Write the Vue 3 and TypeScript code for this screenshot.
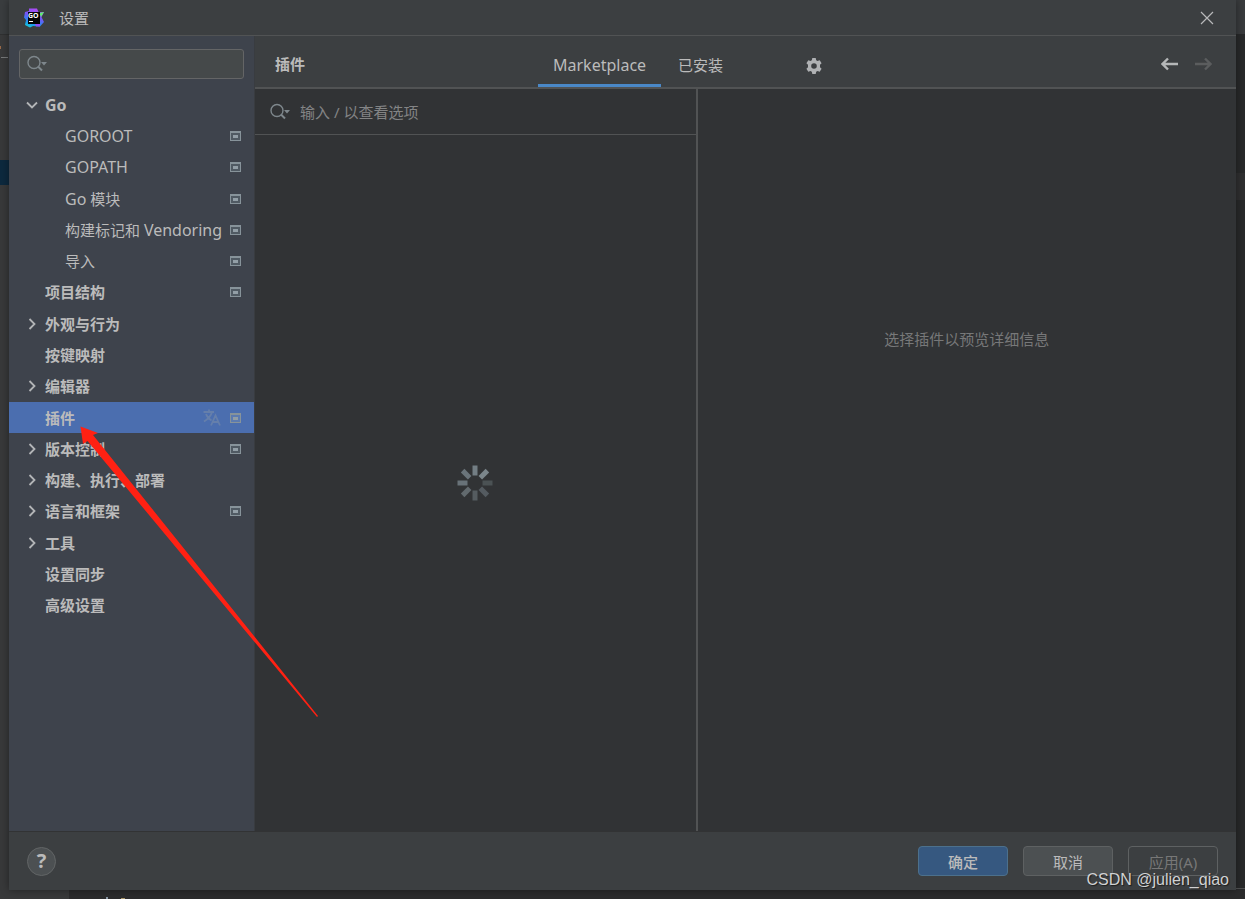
<script setup lang="ts">
import { ref } from 'vue'

interface TreeItem {
  id: string
  label: string
  level: 0 | 1
  arrow?: 'open' | 'closed'
  project?: boolean
}

const items: TreeItem[] = [
  { id: 'go', label: 'Go', level: 0, arrow: 'open' },
  { id: 'goroot', label: 'GOROOT', level: 1, project: true },
  { id: 'gopath', label: 'GOPATH', level: 1, project: true },
  { id: 'modules', label: 'Go 模块', level: 1, project: true },
  { id: 'vendoring', label: '构建标记和 Vendoring', level: 1, project: true },
  { id: 'imports', label: '导入', level: 1, project: true },
  { id: 'structure', label: '项目结构', level: 0, project: true },
  { id: 'appearance', label: '外观与行为', level: 0, arrow: 'closed' },
  { id: 'keymap', label: '按键映射', level: 0 },
  { id: 'editor', label: '编辑器', level: 0, arrow: 'closed' },
  { id: 'plugins', label: '插件', level: 0, project: true },
  { id: 'vcs', label: '版本控制', level: 0, arrow: 'closed', project: true },
  { id: 'build', label: '构建、执行、部署', level: 0, arrow: 'closed' },
  { id: 'languages', label: '语言和框架', level: 0, arrow: 'closed', project: true },
  { id: 'tools', label: '工具', level: 0, arrow: 'closed' },
  { id: 'sync', label: '设置同步', level: 0 },
  { id: 'advanced', label: '高级设置', level: 0 },
]

// Latin runs are set one size larger than the Chinese around them
const runs = (label: string) =>
  label
    .split(/([A-Za-z]+)/)
    .filter(Boolean)
    .map((text) => ({ text, latin: /[A-Za-z]/.test(text) }))

const selected = ref('plugins')
const tab = ref<'marketplace' | 'installed'>('marketplace')
const treeQuery = ref('')
const pluginQuery = ref('')

const spokes = ['#737e84', '#7b868b', '#4b5254', '#545b60', '#555c60', '#626a6e', '#687278', '#6a747a']
</script>

<template>
  <div class="screen">
    <div class="backdrop" aria-hidden="true">
      <span class="bd-left-top"></span>
      <span class="bd-mark"></span>
      <span class="bd-rule"></span>
      <span class="bd-selection"></span>
      <span class="bd-right-top"></span>
      <span class="bd-right-band"></span>
      <span class="bd-bottom"></span>
      <span class="bd-right-rule"></span>
      <span class="bd-glyph"></span>
      <span class="bd-glyph bd-glyph-warm"></span>
    </div>

    <main class="dialog">
      <header class="titlebar">
        <svg class="logo" width="20" height="20" viewBox="0 0 20 20" aria-hidden="true">
          <defs>
            <linearGradient id="logoFill" x1="0.7" y1="0" x2="0.3" y2="1">
              <stop offset="0" stop-color="#b74af7" />
              <stop offset="0.45" stop-color="#7059f5" />
              <stop offset="0.75" stop-color="#218bf0" />
              <stop offset="1" stop-color="#16c7d8" />
            </linearGradient>
          </defs>
          <path d="M5 0.500L13 0.500L14.500 4L20 4L17.500 9L20 14L16 18.500L9 18L6 19.500L1 17L2 12L0 9.500L1 4L5 3Z" fill="url(#logoFill)" />
          <path d="M15.500 5L20 4L17 9Z" fill="#5ff06c" />
          <path d="M11 16L16 15L16 18.500L12 18.500Z" fill="#8b4df6" />
          <rect x="4" y="4" width="12" height="12" fill="#050505" />
          <text x="4" y="10" class="logo-text">GO</text>
          <rect x="5" y="13" width="4" height="1" fill="#fff" />
        </svg>
        <h1>设置</h1>
        <button class="icon-button close" type="button" aria-label="关闭">
          <svg width="14" height="14" viewBox="0 0 14 14"><path d="M1 1L13 13M13 1L1 13" stroke="#b8b9ba" stroke-width="1.200" /></svg>
        </button>
      </header>

      <div class="body">
        <aside class="sidebar">
          <label class="tree-search">
            <svg width="22" height="18" viewBox="0 0 22 18" aria-hidden="true">
              <circle cx="7" cy="7.500" r="6" fill="none" stroke="#7e878c" stroke-width="1.400" />
              <path d="M11 11.500L15 15.500" stroke="#7e878c" stroke-width="2" />
              <path d="M14 7H20L17 10.500Z" fill="#7e878c" />
            </svg>
            <input v-model="treeQuery" type="text" aria-label="搜索设置" />
          </label>
          <nav aria-label="设置">
            <ul class="tree">
              <li v-for="item in items" :key="item.id">
                <a
                  href="#"
                  class="row"
                  :class="{ child: item.level === 1, selected: item.id === selected }"
                  :aria-current="item.id === selected ? 'page' : undefined"
                  @click.prevent="selected = item.id"
                >
                  <svg class="chevron" width="14" height="14" viewBox="0 0 14 14" aria-hidden="true">
                    <path v-if="item.arrow === 'open'" d="M2 4.500L7 9.500L12 4.500" />
                    <path v-else-if="item.arrow === 'closed'" d="M4.500 2L9.500 7L4.500 12" />
                  </svg>
                  <span class="row-label"><span v-for="(run, i) in runs(item.label)" :key="i" :class="{ latin: run.latin }">{{ run.text }}</span></span>
                  <svg v-if="item.id === 'plugins'" class="translate" width="18" height="17" viewBox="0 0 18 17" aria-hidden="true">
                    <path d="M0.500 3H11M6 0.500V3M9 3C8 7 5 10 1 12.500M3 5C4 8 6 10 8.500 11.500M8 16.500L12.500 6.500L17 16.500M9.500 13H15.500" fill="none" stroke="#657fab" stroke-width="1.800" />
                  </svg>
                  <svg v-if="item.project" class="project" width="11" height="10" viewBox="0 0 11 10" aria-hidden="true">
                    <rect width="11" height="10" fill="#87939a" />
                    <rect class="project-gap" x="1" y="2" width="9" height="7" />
                    <rect x="3" y="4" width="5" height="3" fill="#929ea6" />
                  </svg>
                </a>
              </li>
            </ul>
          </nav>
        </aside>

        <section class="content">
          <header class="content-head">
            <h2>插件</h2>
            <div class="tabs" role="tablist">
              <button type="button" role="tab" class="latin" :aria-selected="tab === 'marketplace'" :class="{ active: tab === 'marketplace' }" @click="tab = 'marketplace'">Marketplace</button>
              <button type="button" role="tab" :aria-selected="tab === 'installed'" :class="{ active: tab === 'installed' }" @click="tab = 'installed'">已安装</button>
            </div>
            <button class="icon-button gear" type="button" aria-label="插件设置">
              <svg width="16" height="16" viewBox="0 0 16 16">
                <path fill="#afb1b3" fill-rule="evenodd" d="M6.300 0H9.700L10.200 2.300L11.500 3L13.700 2.200L15.600 5.200L14 6.800V9.200L15.600 10.800L13.700 13.800L11.500 13L10.200 13.700L9.700 16H6.300L5.800 13.700L4.500 13L2.300 13.800L0.400 10.800L2 9.200V6.800L0.400 5.200L2.300 2.200L4.500 3L5.800 2.300ZM8 5.200A2.800 2.800 0 1 0 8 10.800A2.800 2.800 0 1 0 8 5.200Z" />
              </svg>
            </button>
            <div class="history">
              <button class="icon-button" type="button" aria-label="后退">
                <svg width="17" height="14" viewBox="0 0 17 14"><path d="M17 7H2M7 1.500L1.500 7L7 12.500" fill="none" stroke="#b5b7b8" stroke-width="2.400" /></svg>
              </button>
              <button class="icon-button" type="button" aria-label="前进" disabled>
                <svg width="17" height="14" viewBox="0 0 17 14"><path d="M0 7H15M10 1.500L15.500 7L10 12.500" fill="none" stroke="#5b5d5e" stroke-width="2.400" /></svg>
              </button>
            </div>
          </header>

          <div class="panes">
            <div class="list-pane">
              <label class="plugin-search">
                <svg width="22" height="18" viewBox="0 0 22 18" aria-hidden="true">
                  <circle cx="7" cy="7.500" r="6" fill="none" stroke="#7e878c" stroke-width="1.400" />
                  <path d="M11 11.500L15 15.500" stroke="#7e878c" stroke-width="2" />
                  <path d="M14 7H20L17 10.500Z" fill="#7e878c" />
                </svg>
                <input v-model="pluginQuery" type="text" placeholder="输入 / 以查看选项" aria-label="搜索插件" />
              </label>
              <div class="loading" role="status" aria-label="正在加载">
                <svg width="36" height="36" viewBox="0 0 36 36">
                  <rect v-for="(color, i) in spokes" :key="i" x="15.500" y="0.500" width="5" height="10" :fill="color" :transform="`rotate(${i * 45} 18 18)`" />
                </svg>
              </div>
            </div>
            <div class="detail-pane">
              <p>选择插件以预览详细信息</p>
            </div>
          </div>
        </section>
      </div>

      <footer class="footer">
        <button class="help" type="button" aria-label="帮助">?</button>
        <div class="actions">
          <button class="action primary" type="button">确定</button>
          <button class="action" type="button">取消</button>
          <button class="action" type="button" disabled>应用(A)</button>
        </div>
      </footer>
    </main>

    <svg class="pointer" width="240" height="292" viewBox="0 0 240 292" aria-hidden="true">
      <path d="M0.500 0.500L18 7L13 9L238 290L237 291L7.500 15L3 18Z" fill="#ff2113" />
    </svg>
    <span class="watermark">CSDN @julien_qiao</span>
  </div>
</template>

<style>
html,
body {
  background: #2b2b2b;
}
</style>

<style scoped>
* {
  box-sizing: border-box;
}
.screen {
  position: relative;
  display: flex;
  min-height: 100vh;
  padding: 0 9px 9px;
  overflow: hidden;
  background: #28292a;
  color: #bbb;
  font: 15px/20px "Noto Sans", "Noto Sans CJK SC", sans-serif;
}
button,
input {
  font: inherit;
  color: inherit;
}
button {
  padding: 0;
  border: 0;
  background: none;
}
h1,
h2,
p,
ul {
  margin: 0;
  padding: 0;
  font-size: 15px;
}
svg {
  display: block;
  flex: none;
}
.latin {
  font-size: 16px;
}

/* Editor window that shows around the dialog */
.backdrop,
.backdrop span {
  position: absolute;
}
.backdrop {
  inset: 0;
}
.backdrop .bd-left-top {
  left: 0;
  top: 0;
  bottom: 0;
  width: 69px;
  background: linear-gradient(#3a3d3f 34px, #2f3031 34px, #2f3031 35px, #38393a 35px);
}
.backdrop .bd-mark {
  left: 0;
  top: 46px;
  width: 1px;
  height: 3px;
  background: #9a6a48;
}
.backdrop .bd-rule {
  left: 1px;
  top: 57px;
  width: 7px;
  height: 1px;
  background: #77797a;
}
.backdrop .bd-selection {
  left: 0;
  top: 160px;
  width: 9px;
  height: 25px;
  background: #0d293e;
}
.backdrop .bd-right-top {
  right: 0;
  top: 0;
  width: 9px;
  height: 34px;
  background: #393b3d;
}
.backdrop .bd-right-band {
  right: 0;
  top: 173px;
  width: 9px;
  height: 27px;
  background: #2f2f30;
}
.backdrop .bd-bottom {
  left: 69px;
  right: 0;
  bottom: 0;
  height: 9px;
  background: #2b2b2c;
}
.backdrop .bd-right-rule {
  right: 0;
  bottom: 10px;
  width: 9px;
  height: 1px;
  background: #505152;
}
.backdrop .bd-glyph {
  left: 106px;
  bottom: 0;
  width: 2px;
  height: 2px;
  background: #8795a3;
}
.backdrop .bd-glyph-warm {
  left: 121px;
  width: 4px;
  height: 1px;
  background: #a89468;
}

.dialog {
  position: relative;
  display: flex;
  flex: 1;
  flex-direction: column;
  min-width: 0;
  background: #3c3f41;
  box-shadow: 0 0 8px rgba(0, 0, 0, 0.4);
}
.titlebar {
  display: flex;
  align-items: center;
  height: 36px;
  padding: 0 22px 0 15px;
  border-bottom: 1px solid #515354;
}
.titlebar h1 {
  margin-left: 15px;
  font-weight: 400;
}
.logo-text {
  fill: #fff;
  font: 700 7px "Noto Sans", sans-serif;
}
.close {
  margin-left: auto;
}
.body {
  display: flex;
  flex: 1;
  border-bottom: 1px solid #323334;
}

.sidebar {
  width: 246px;
  flex: none;
  padding-top: 13px;
  border-right: 1px solid #393c40;
  background: #3e434c;
}
.tree-search {
  display: flex;
  align-items: center;
  height: 30px;
  margin: 0 10px 10px;
  padding: 0 7px;
  border: 1px solid #646566;
  border-radius: 3px;
  background: #45494a;
}
input {
  flex: 1;
  min-width: 0;
  padding: 0;
  border: 0;
  outline: 0;
  background: none;
}
.tree {
  display: grid;
  grid-auto-rows: 1fr;
  height: 532px;
  list-style: none;
}
.row {
  display: flex;
  align-items: center;
  height: 100%;
  padding: 0 13px 0 16px;
  color: inherit;
  font-weight: 700;
  text-decoration: none;
}
.row.child {
  font-weight: 400;
}
.row.selected {
  background: #4b6eaf;
}
.chevron {
  margin-right: 6px;
  fill: none;
  stroke: #b3b5b7;
  stroke-width: 1.8;
}
.child .chevron {
  margin-right: 26px;
}
.row-label {
  flex: 1;
  white-space: pre;
}
.translate {
  margin-right: 9px;
}
.project-gap {
  fill: #505a63;
}
.selected .project-gap {
  fill: #5c7bb0;
}

.content {
  display: flex;
  flex: 1;
  flex-direction: column;
  min-width: 0;
}
.content-head {
  display: flex;
  align-items: center;
  height: 53px;
  padding: 0 24px 0 20px;
  border-bottom: 2px solid #515354;
}
.content-head h2 {
  width: 263px;
  padding-top: 4px;
}
.tabs {
  display: flex;
  align-self: stretch;
  gap: 2px;
}
.tabs button {
  padding: 12px 15px 3px;
  border-bottom: 3px solid transparent;
}
.tabs .active {
  border-color: #4a88c7;
}
.gear {
  margin: 8px 0 0 68px;
}
.history {
  display: flex;
  gap: 17px;
  margin: 4px 0 0 auto;
}
.panes {
  display: flex;
  flex: 1;
  background: #313335;
}
.list-pane {
  display: flex;
  flex: 9;
  flex-direction: column;
  min-width: 0;
}
.plugin-search {
  display: flex;
  align-items: center;
  gap: 8px;
  height: 46px;
  padding: 0 15px;
  border-bottom: 1px solid #515354;
}
input::placeholder {
  color: #838485;
  opacity: 1;
}
.loading {
  display: grid;
  flex: 1;
  place-items: center;
}
.detail-pane {
  flex: 11;
  min-width: 0;
  padding-top: 240px;
  border-left: 2px solid #515354;
  color: #777879;
  text-align: center;
}

.footer {
  display: flex;
  align-items: center;
  justify-content: space-between;
  height: 58px;
  padding: 0 18px;
}
.help {
  width: 29px;
  height: 29px;
  border: 1px solid #626566;
  border-radius: 50%;
  background: #4c5052;
  font-size: 20px;
  font-weight: 700;
}
.actions {
  display: flex;
  gap: 15px;
}
.action {
  width: 90px;
  height: 30px;
  padding-top: 2px;
  border: 1px solid #5e6162;
  border-radius: 4px;
  background: #4c5052;
}
.action.primary {
  border-color: #4c708c;
  background: #365880;
  font-weight: 500;
}
.action:disabled {
  background: none;
  color: #777;
}

.pointer {
  position: absolute;
  left: 80px;
  top: 426px;
  pointer-events: none;
}
.watermark {
  position: absolute;
  right: 16px;
  bottom: 9px;
  color: #d0d1d2;
  font: 16px/20px "Liberation Sans", sans-serif;
  text-shadow: 1px 1px 1px #1c1d1e;
}
</style>
